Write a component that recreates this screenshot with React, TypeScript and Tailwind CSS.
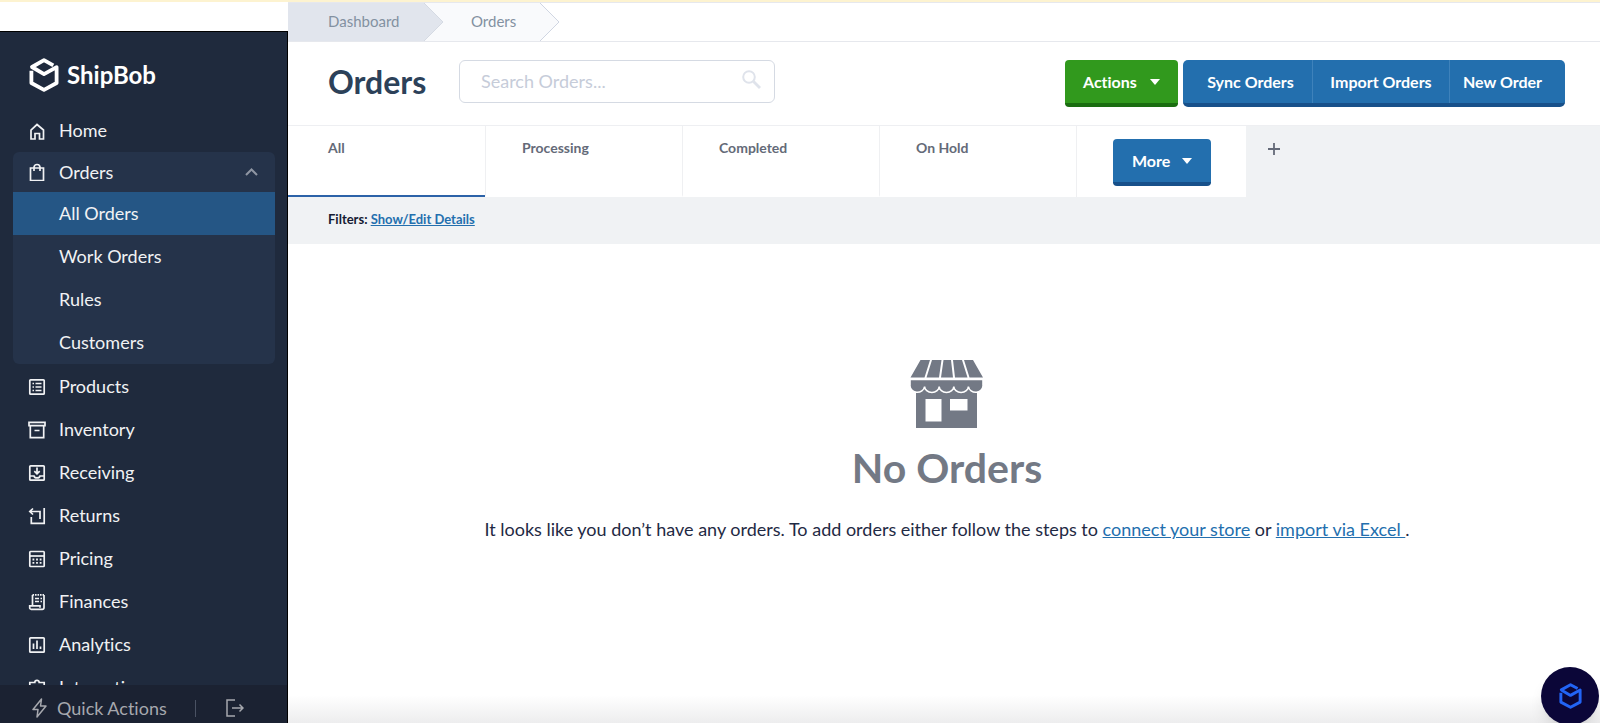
import React from 'react';

const LogoMark = ({ className }: { className?: string }) => (
  <svg className={className} viewBox="0 0 30 34" fill="none" stroke="currentColor" strokeWidth="3.8" strokeLinejoin="round">
    <path d="M24.300 7.300 15 2.200 3 9 15 16.200 27.600 9.200V25L15 31.800 2.400 25V12.800" />
  </svg>
);

const icons: Record<string, React.ReactNode> = {
  Home: <path d="M3 17V8l6-5.500L15.500 8v9H11.500v-5.500h-4.500V17z" />,
  Orders: (
    <>
      <path d="M2.500 5h13v12.500h-13z" />
      <path d="M6 8V4.500a3 3 0 0 1 6 0V8" />
    </>
  ),
  Products: (
    <>
      <rect x="1.800" y="1.800" width="14.400" height="14.400" rx="0.800" />
      <path d="M4.500 5.500h1.500M7.500 5.500h6M4.500 9h1.500M7.500 9h6M4.500 12.500h1.500M7.500 12.500h6" />
    </>
  ),
  Inventory: <path d="M1 1.300h16v3.400H1zM2.300 4.700v12h13.400v-12M6.500 9.500h5" />,
  Receiving: (
    <>
      <rect x="1.800" y="1.800" width="14.400" height="14.400" rx="0.800" />
      <path d="M9 3.500v6M6.300 7.200 9 9.800l2.700-2.600M2 12h4c.5 2.500 5.500 2.500 6 0h4" />
    </>
  ),
  Returns: <path d="M16.200 1v15.300H3.300V10M1.800 4.500H12v7.500M5 1.500l-3.200 3 3.200 3" />,
  Pricing: (
    <>
      <rect x="1.800" y="1.500" width="14.400" height="15" rx="0.800" />
      <path d="M2 6h14" />
      <path d="M4.500 9.500h9M4.500 12.800h9" strokeDasharray="1.800 1.800" strokeWidth="1.800" />
    </>
  ),
  Finances: (
    <>
      <path d="M4.500 12.500V2M16 2v12.500a1.800 1.800 0 0 1-1.800 1.800H3.200a1.500 1.500 0 0 1-1.500-1.700v-1.800H12v2" />
      <path d="M4.500 1.800H16" strokeDasharray="1.600 0.900" />
      <path d="M7 5.500h4M12.500 5.500h1.500M7 8.500h4M12.500 8.500h1.500" />
    </>
  ),
  Analytics: (
    <>
      <rect x="1.800" y="1.800" width="14.400" height="14.400" rx="0.800" />
      <path d="M5.500 7.500V13M9 4.500V13M12.500 10.500V13" />
    </>
  ),
  Integrations: <path d="M1.800 16.500V3.500h5a2.200 2.200 0 0 1 4.400 0h5v13z" />,
};

const NavIcon = ({ name }: { name: string }) => (
  <svg className="h-[18px] w-[18px] shrink-0" viewBox="0 0 18 18" fill="none" stroke="currentColor" strokeWidth="1.700">
    {icons[name]}
  </svg>
);

const NavItem = ({ name }: { name: string }) => (
  <a href="#" className="flex h-[43px] shrink-0 items-center gap-[13px] pl-7">
    <NavIcon name={name} />
    {name}
  </a>
);

const orderLinks = ['All Orders', 'Work Orders', 'Rules', 'Customers'];
const lowerLinks = ['Products', 'Inventory', 'Receiving', 'Returns', 'Pricing', 'Finances', 'Analytics', 'Integrations'];
const tabs = ['All', 'Processing', 'Completed', 'On Hold'];

const Caret = () => (
  <svg className="mt-px h-[6px] w-[10px]" viewBox="0 0 10 6" fill="currentColor">
    <path d="M0 0h10L5 6z" />
  </svg>
);

const Sidebar = () => (
  <aside className="mt-[29px] flex w-72 shrink-0 flex-col border-t border-r border-black bg-[#1f2a3d] text-[18px] text-[#f1f2f4]">
    <a href="#" className="flex h-[77px] shrink-0 items-center gap-[8px] pt-[9px] pl-[29px] text-[24px] font-bold text-white">
      <LogoMark className="h-[34px] w-[30px]" />
      ShipBob
    </a>
    <nav className="flex min-h-0 flex-1 flex-col overflow-hidden">
      <NavItem name="Home" />
      <div className="mr-3 mb-px ml-[13px] shrink-0 overflow-hidden rounded-md bg-[#25334a]">
        <button className="flex h-10 w-full items-center gap-[13px] pr-[17px] pl-[15px]">
          <NavIcon name="Orders" />
          Orders
          <svg className="ml-auto h-2 w-[13px]" viewBox="0 0 13 8" fill="none" stroke="#8f96a3" strokeWidth="2">
            <path d="M1 7l5.500-5.500L12 7" />
          </svg>
        </button>
        {orderLinks.map((label) => (
          <a
            key={label}
            href="#"
            className={`flex h-[43px] items-center pl-[46px] ${label === 'All Orders' ? 'bg-[#255685]' : ''}`}
          >
            {label}
          </a>
        ))}
      </div>
      {lowerLinks.map((label) => (
        <NavItem key={label} name={label} />
      ))}
    </nav>
    <div className="flex h-[38px] shrink-0 items-center bg-[#1b2232] pt-2 pl-8 text-[#a6a8ae]">
      <button className="flex items-center gap-[10px]">
        <svg className="h-5 w-[15px]" viewBox="0 0 15 20" fill="none" stroke="currentColor" strokeWidth="1.500" strokeLinejoin="round">
          <path d="M9.500 1 1 11.500h5L5 19l9-11H8.500z" />
        </svg>
        Quick Actions
      </button>
      <span className="ml-7 h-[17px] w-px bg-[#4a5263]" />
      <button className="ml-[30px]" aria-label="Log out">
        <svg className="h-[18px] w-[18px]" viewBox="0 0 18 18" fill="none" stroke="currentColor" strokeWidth="1.500">
          <path d="M9 1H1v16h8M6 9h11M13.500 5.500 17 9l-3.500 3.500" />
        </svg>
      </button>
    </div>
  </aside>
);

const Breadcrumbs = () => (
  <nav className="flex h-10 items-stretch border-t border-b border-[#e6e8ed] text-[15px] text-[#8391a1]">
    <a href="#" className="flex w-[136px] items-center bg-[#e1e5ed] pb-0.5 pl-10">
      Dashboard
    </a>
    <svg className="h-full w-5 bg-[#f9fafc]" viewBox="0 0 20 38" preserveAspectRatio="none">
      <path d="M0 0l19 19L0 38z" fill="#e1e5ed" />
      <path d="M0 0l19 19L0 38" fill="none" stroke="#d5dae3" />
    </svg>
    <a href="#" className="flex w-24 items-center bg-[#f9fafc] pb-0.5 pl-[27px]">
      Orders
    </a>
    <svg className="h-full w-5" viewBox="0 0 20 38" preserveAspectRatio="none">
      <path d="M0 0l19 19L0 38" fill="#f9fafc" stroke="#d0d6e2" />
    </svg>
  </nav>
);

const Header = () => (
  <header className="flex h-[83px] items-start pt-[18px] pr-[35px] pl-10">
    <h1 className="w-[131px] text-[32px] leading-[43px] font-bold text-[#2c4159]">Orders</h1>
    <div className="relative w-[316px]">
      <input
        type="text"
        aria-label="Search Orders"
        placeholder="Search Orders..."
        className="block h-[43px] w-full rounded-md border border-[#d5dae3] pr-12 pb-0.5 pl-[21px] text-[18px] placeholder:text-[#c6ccd9]"
      />
      <svg className="absolute top-[10px] right-[14px] h-[19px] w-[19px]" viewBox="0 0 19 19" fill="none" stroke="#dfe3eb">
        <circle cx="7" cy="7" r="5.800" strokeWidth="2" />
        <path d="M11.500 11.500 18 18" strokeWidth="2.800" />
      </svg>
    </div>
    <div className="ml-auto flex gap-[5px] text-[16px] font-bold text-white">
      <button className="flex h-[47px] w-[113px] items-center justify-between rounded-[4px] border-b-4 border-[#1a6d10] bg-[#31991d] px-[18px]">
        Actions
        <Caret />
      </button>
      <div className="flex h-[47px] overflow-hidden rounded-[5px] border-b-4 border-[#17508a] bg-[#236fae]">
        <button className="w-[129px] pl-[6px]">Sync Orders</button>
        <button className="w-[137px] border-l border-[#3e82bb]">Import Orders</button>
        <button className="w-[116px] border-l border-[#3e82bb] pr-[10px]">New Order</button>
      </div>
    </div>
  </header>
);

const Tabs = () => (
  <div className="flex h-[72px] border-t border-[#eeeff2] bg-[#f0f2f4] text-[14px] font-bold text-[#646a78]">
    {tabs.map((tab) => (
      <button
        key={tab}
        className={`flex w-[197px] items-start border-b-2 bg-white pt-[11px] ${
          tab === 'All' ? 'border-b-[#2c62a8] pl-10' : 'border-l border-b-white border-l-[#eff0f2] pl-9'
        }`}
      >
        {tab}
      </button>
    ))}
    <div className="w-[170px] border-l border-[#eff0f2] bg-white pt-[13px] pl-9">
      <button className="flex h-[47px] w-[98px] items-center justify-between rounded-[4px] border-b-4 border-[#17508a] bg-[#236fae] px-[19px] text-[16px] text-white">
        More
        <Caret />
      </button>
    </div>
    <button className="flex items-start pt-[17px] pl-[22px]" aria-label="Add tab">
      <svg className="h-[12px] w-[12px]" viewBox="0 0 12 12" stroke="#646a78" strokeWidth="1.800">
        <path d="M6 0v12M0 6h12" />
      </svg>
    </button>
  </div>
);

const StoreIcon = () => (
  <svg className="h-[68px] w-[74px]" viewBox="0 0 74 68" fill="#737985">
    <path d="M10.500 0h9.500L14.500 17.500H.500zM22 0h9.500l-2.500 17.500H16.500zM33.500 0h7.500l2 17.500H31zM43 0h9l5.500 17.500H45zM54 0h9l10 17.500H59.500z" />
    <path fillRule="evenodd" d="M6 25h61v43H6zM15.500 39v22.500h16V39zM40 39v11.500h17.500V39z" />
    <path
      d="M0 19.500h73V25a7.300 6.500 0 0 1-14.600 1.500 7.300 6 0 0 1-14.600 0 7.300 6 0 0 1-14.600 0 7.300 6 0 0 1-14.600 0A7.300 6.500 0 0 1 0 25z"
      stroke="#fff"
      strokeWidth="1.600"
    />
  </svg>
);

const EmptyState = () => (
  <section className="flex flex-col items-center pt-4 pl-1.5 text-[18px] text-[#1f2a44]">
    <StoreIcon />
    <h2 className="mt-4 text-[41px] leading-[48px] font-bold text-[#737985]">No Orders</h2>
    <p className="mt-6">
      It looks like you don’t have any orders. To add orders either follow the steps to{' '}
      <a href="#" className="text-[#236fae] underline">connect your store</a> or{' '}
      <a href="#" className="text-[#236fae] underline">import via Excel&nbsp;</a>.
    </p>
  </section>
);

export default function App() {
  return (
    <div className="flex h-screen flex-col overflow-hidden bg-white font-['Lato',sans-serif] [font-variant-ligatures:none]">
      <div className="h-[2px] shrink-0 bg-[#fdf3d0]" />
      <div className="flex min-h-0 flex-1">
        <Sidebar />
        <main className="flex min-w-0 flex-1 flex-col">
          <Breadcrumbs />
          <Header />
          <Tabs />
          <div className="mb-[100px] flex h-[47px] items-start bg-[#f0f2f4] pt-[13px] pl-10 text-[13px] font-bold text-[#161b33]">
            Filters:&nbsp;
            <a href="#" className="text-[#236fae] underline">Show/Edit Details</a>
          </div>
          <EmptyState />
          <div className="mt-auto h-7 bg-linear-to-b from-white to-[#ededee]" />
        </main>
      </div>
      <button
        className="fixed right-px -bottom-[2px] flex h-[58px] w-[58px] items-center justify-center rounded-full bg-[#0b0638] text-[#2264f5] shadow-lg"
        aria-label="Help"
      >
        <LogoMark className="h-[26px] w-[23px]" />
      </button>
    </div>
  );
}
